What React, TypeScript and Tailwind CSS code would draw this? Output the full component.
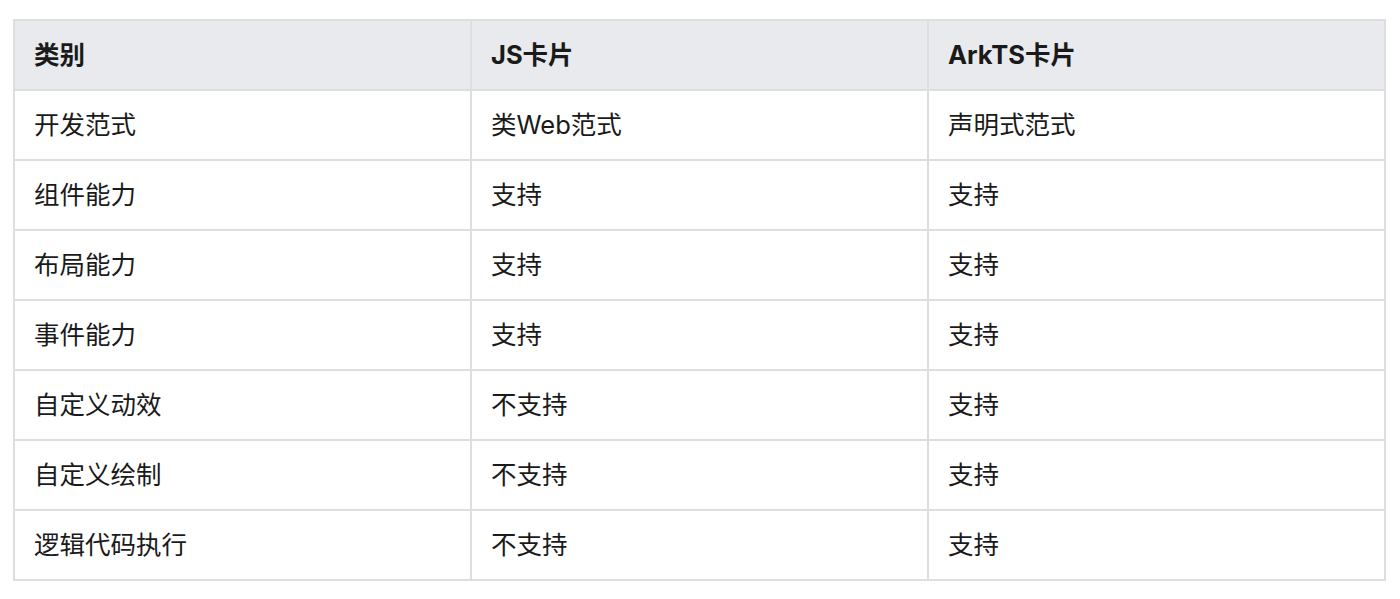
import React from "react";

const rows: [string, string, string][] = [
  ["开发范式", "类Web范式", "声明式范式"],
  ["组件能力", "支持", "支持"],
  ["布局能力", "支持", "支持"],
  ["事件能力", "支持", "支持"],
  ["自定义动效", "不支持", "支持"],
  ["自定义绘制", "不支持", "支持"],
  ["逻辑代码执行", "不支持", "支持"],
];

export default function App() {
  return (
    <div
      className="w-[1400px] h-[599px] bg-white pt-[19px] pl-[13px]"
      style={{ fontFamily: 'Inter, "Noto Sans CJK SC", sans-serif' }}
    >
      <table className="w-[1371px] border-collapse table-fixed text-[25.5px] text-[#1a1a1a]">
        <colgroup>
          <col className="w-[457px]" />
          <col className="w-[457px]" />
          <col className="w-[457px]" />
        </colgroup>
        <thead>
          <tr className="h-[70px] bg-[#e9eaed]">
            {["类别", "JS卡片", "ArkTS卡片"].map((h) => (
              <th
                key={h}
                className="border-2 border-[#dedede] px-[19px] text-left font-bold"
              >
                {h}
              </th>
            ))}
          </tr>
        </thead>
        <tbody>
          {rows.map((r) => (
            <tr key={r[0]} className="h-[70px]">
              {r.map((c, i) => (
                <td
                  key={i}
                  className="border-2 border-[#dedede] px-[19px] text-left font-normal"
                >
                  {c}
                </td>
              ))}
            </tr>
          ))}
        </tbody>
      </table>
    </div>
  );
}
